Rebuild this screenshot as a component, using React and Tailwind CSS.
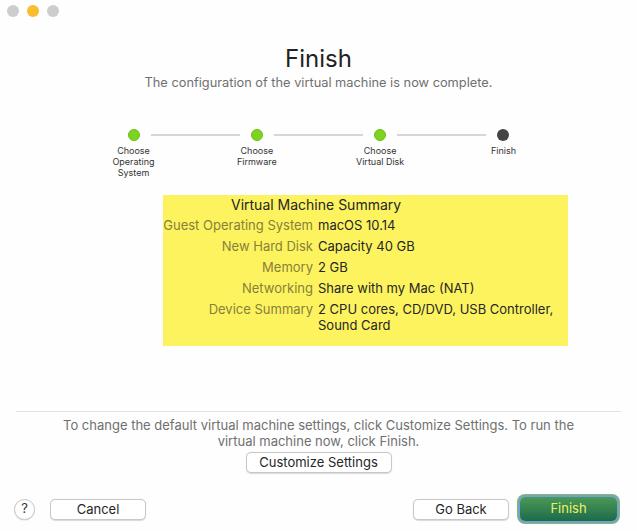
import React from "react";

const steps = [
  { label: ["Choose", "Operating", "System"], done: true },
  { label: ["Choose", "Firmware"], done: true },
  { label: ["Choose", "Virtual Disk"], done: true },
  { label: ["Finish"], done: false },
];

const rows = [
  ["Guest Operating System", ["macOS 10.14"]],
  ["New Hard Disk", ["Capacity 40 GB"]],
  ["Memory", ["2 GB"]],
  ["Networking", ["Share with my Mac (NAT)"]],
  ["Device Summary", ["2 CPU cores, CD/DVD, USB Controller,", "Sound Card"]],
];

function Btn({ children, className = "" }) {
  return (
    <button
      className={
        "h-[21px] rounded-[5px] border border-[#c8c8c8] bg-white text-[13px] text-[#262626] shadow-[0_0.5px_1px_rgba(0,0,0,0.15)] " +
        className
      }
    >
      {children}
    </button>
  );
}

export default function App() {
  return (
    <div
      className="relative flex h-[531px] w-[637px] flex-col bg-[#fefefe] text-[#262626]"
      style={{ fontFamily: "Inter, 'Liberation Sans', sans-serif" }}
    >
      {/* title bar */}
      <div className="flex h-[22px] items-center gap-[8px] pl-[7px]">
        <span className="h-[12px] w-[12px] rounded-full bg-[#cdcdcd]" />
        <span className="h-[12px] w-[12px] rounded-full bg-[#f9bd2f]" />
        <span className="h-[12px] w-[12px] rounded-full bg-[#cdcdcd]" />
      </div>

      <div className="mt-[23px] flex flex-col items-center">
        <h1 className="text-[24px] leading-[28px] text-[#222]">Finish</h1>
        <p className="mt-[2px] text-[12.8px] leading-[16px] text-[#707070]">
          The configuration of the virtual machine is now complete.
        </p>
      </div>

      {/* steps */}
      <div className="mt-[38px] flex justify-center">
        <div className="flex w-[432px] items-start">
          {steps.map((s, i) => (
            <React.Fragment key={i}>
              <div className="flex w-[62px] flex-col items-center">
                <span
                  className={
                    "h-[12px] w-[12px] rounded-full " +
                    (s.done ? "bg-[#7ed321] border border-[#6abf17]" : "bg-[#444]")
                  }
                />
                <div className="mt-[4px] text-center text-[9px] leading-[11px] text-[#333]">
                  {s.label.map((l) => (
                    <div key={l}>{l}</div>
                  ))}
                </div>
              </div>
              {i < steps.length - 1 && (
                <div className="mx-[-14px] mt-[5px] h-[2px] flex-1 bg-[#d6d6d6]" />
              )}
            </React.Fragment>
          ))}
        </div>
      </div>

      {/* summary */}
      <div className="mt-[17px] ml-[163px] flex h-[151px] w-[405px] flex-col bg-[#fdf35f] pt-[1px]">
        <div className="ml-[68px] text-[14px] leading-[18px] text-[#262626]">
          Virtual Machine Summary
        </div>
        <div className="mt-[3px] flex flex-col gap-[5px]">
          {rows.map(([k, v]) => (
            <div key={k} className="flex text-[13px] leading-[16px]">
              <div className="w-[155px] shrink-0 whitespace-nowrap pr-[5px] text-right text-[#87803a]">{k}</div>
              <div className="whitespace-nowrap text-[#262626]">
                {v.map((t) => (
                  <div key={t}>{t}</div>
                ))}
              </div>
            </div>
          ))}
        </div>
      </div>

      {/* footer */}
      <div className="mx-[16px] mt-[65px] h-px bg-[#e2e2e2]" />
      <p className="mx-auto mt-[5px] w-[520px] text-center text-[13px] leading-[16px] text-[#707070]">
        To change the default virtual machine settings, click Customize Settings. To run the
        virtual machine now, click Finish.
      </p>
      <div className="mt-[3px] flex justify-center">
        <Btn className="w-[146px]">Customize Settings</Btn>
      </div>

      <div className="mt-[24px] flex items-center pl-[14px] pr-[20px]">
        <span className="flex h-[21px] w-[21px] items-center justify-center rounded-full border border-[#c8c8c8] bg-white text-[13px] text-[#333] shadow-[0_0.5px_1px_rgba(0,0,0,0.15)]">
          ?
        </span>
        <Btn className="ml-[15px] w-[96px]">Cancel</Btn>
        <div className="flex-1" />
        <Btn className="w-[96px]">Go Back</Btn>
        <button className="ml-[11px] h-[24px] w-[97px] rounded-[5px] bg-gradient-to-b from-[#4b9a55] to-[#1c6a4a] text-[13px] text-[#e9f36a] shadow-[0_0_0_2px_#6fa3d8,0_0_0_3px_#8bb860]">
          Finish
        </button>
      </div>
    </div>
  );
}
